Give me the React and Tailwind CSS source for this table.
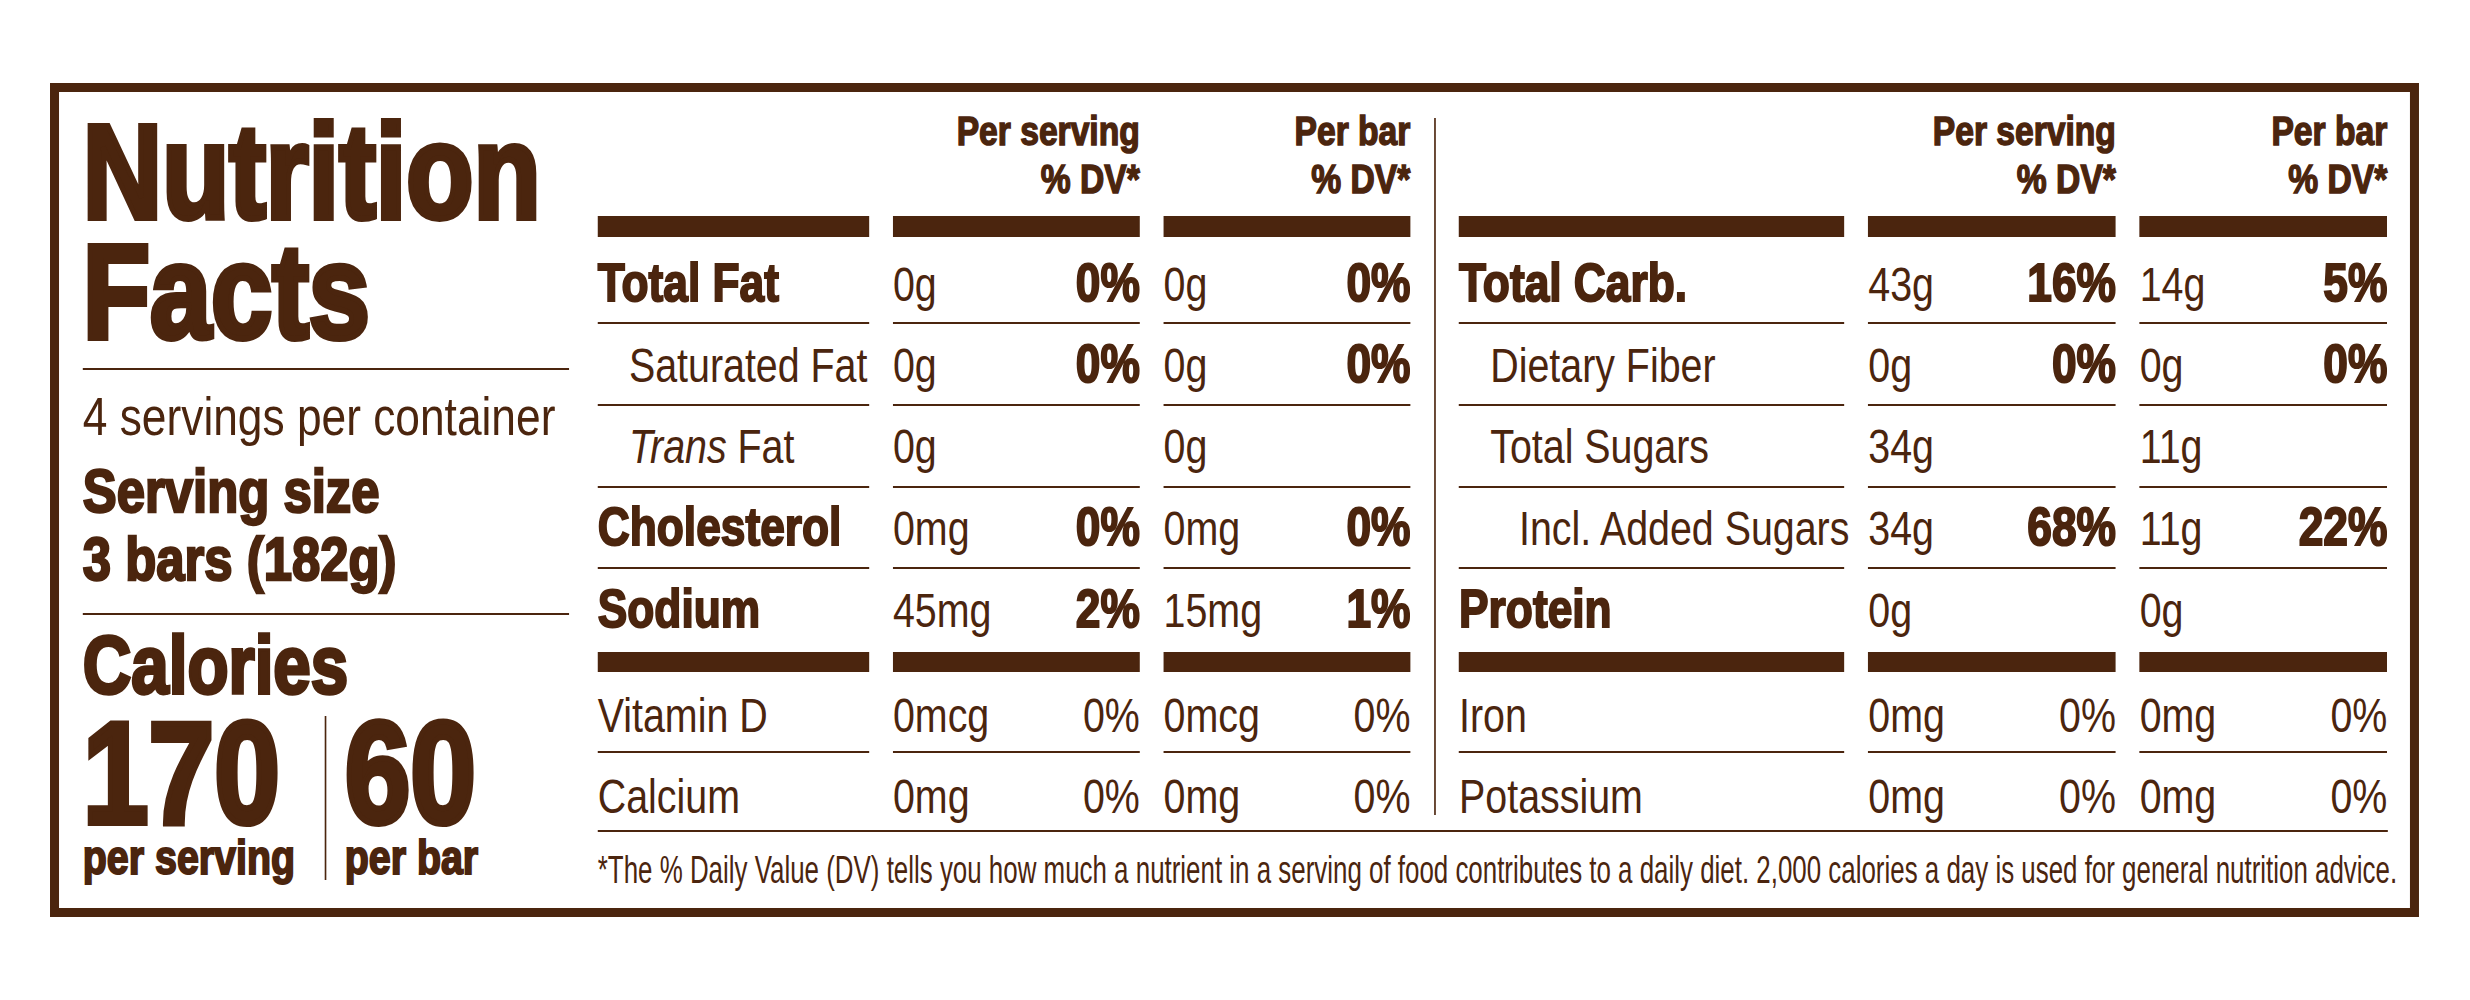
import React from "react";

const rowsMeta = [
  { h: "h-[87px]", p: "pb-[13px]", s: "border-b-2" },
  { h: "h-[82px]", p: "pb-[14px]", s: "border-b-2" },
  { h: "h-[82px]", p: "pb-[15px]", s: "border-b-2" },
  { h: "h-[81px]", p: "pb-[14px]", s: "border-b-2" },
  { h: "h-[103px]", p: "pb-[17px]", s: "border-b-[20px]" },
  { h: "h-[81px]", p: "pb-[11px]", s: "border-b-2" },
  { h: "h-[77px]", p: "pb-[9px]", s: "" },
];

const leftRows = [
  { l: "Total Fat", b: true, a: "0g", ap: "0%", c: "0g", cp: "0%", pb: true },
  { l: "Saturated Fat", i: 1, a: "0g", ap: "0%", c: "0g", cp: "0%", pb: true },
  {
    l: (
      <>
        <span className="italic">Trans</span> Fat
      </>
    ),
    i: 1,
    a: "0g",
    c: "0g",
  },
  { l: "Cholesterol", b: true, a: "0mg", ap: "0%", c: "0mg", cp: "0%", pb: true },
  { l: "Sodium", b: true, a: "45mg", ap: "2%", c: "15mg", cp: "1%", pb: true },
  { l: "Vitamin D", a: "0mcg", ap: "0%", c: "0mcg", cp: "0%" },
  { l: "Calcium", a: "0mg", ap: "0%", c: "0mg", cp: "0%" },
];

const rightRows = [
  { l: "Total Carb.", b: true, a: "43g", ap: "16%", c: "14g", cp: "5%", pb: true },
  { l: "Dietary Fiber", i: 1, a: "0g", ap: "0%", c: "0g", cp: "0%", pb: true },
  { l: "Total Sugars", i: 1, a: "34g", c: "11g" },
  { l: "Incl. Added Sugars", i: 2, a: "34g", ap: "68%", c: "11g", cp: "22%", pb: true },
  { l: "Protein", b: true, a: "0g", c: "0g" },
  { l: "Iron", a: "0mg", ap: "0%", c: "0mg", cp: "0%" },
  { l: "Potassium", a: "0mg", ap: "0%", c: "0mg", cp: "0%" },
];

const BOLD = "text-[54px] font-bold [-webkit-text-stroke:2px_#4b250e]";
const REG = "text-[48px] font-normal";

function Header({ title }) {
  return (
    <div className="h-[145px] border-b-[21px] border-[#4b250e] pt-[15px] text-right text-[41px] leading-[48px] font-bold [-webkit-text-stroke:1.5px_#4b250e]">
      <div>{title}</div>
      <div>% DV*</div>
    </div>
  );
}

function Table({ rows, cols }) {
  return (
    <div className={`grid ${cols} gap-x-[29px]`}>
      <div className="h-[145px] border-b-[21px] border-[#4b250e]" />
      <Header title="Per serving" />
      <Header title="Per bar" />
      {rows.map((r, k) => {
        const m = rowsMeta[k];
        const cell = `flex items-end leading-none whitespace-nowrap border-[#4b250e] ${m.h} ${m.p} ${m.s}`;
        const ind = r.i === 1 ? "pl-[38px]" : r.i === 2 ? "pl-[73px]" : "";
        const pc = r.pb ? BOLD : REG;
        return (
          <React.Fragment key={k}>
            <div className={cell}>
              <span className={`${ind} ${r.b ? BOLD : REG}`}>{r.l}</span>
            </div>
            <div className={`${cell} justify-between`}>
              <span className={REG}>{r.a}</span>
              <span className={pc}>{r.ap || ""}</span>
            </div>
            <div className={`${cell} justify-between`}>
              <span className={REG}>{r.c}</span>
              <span className={pc}>{r.cp || ""}</span>
            </div>
          </React.Fragment>
        );
      })}
    </div>
  );
}

export default function App() {
  return (
    <div className="min-h-screen overflow-hidden bg-white pl-[50px] pt-[83px] text-[#4b250e] font-['Liberation_Sans',Arial,sans-serif]">
      {/* condensed type: the whole label is drawn at Arial widths and narrowed */}
      <div className="w-[2889px] h-[834px] origin-top-left scale-x-[0.82] border-y-[9px] border-x-[11px] border-[#4b250e] flex">
        {/* Left panel */}
        <div className="ml-[29px] w-[593px] pt-[20px] flex flex-col">
          <div className="text-[134px] leading-[120px] font-bold [-webkit-text-stroke:6px_#4b250e]">
            <div>Nutrition</div>
            <div>Facts</div>
          </div>
          <div className="mt-[16px] h-[2px] bg-[#4b250e]" />
          <div className="mt-[19px] text-[54px] leading-none whitespace-nowrap">
            4 servings per container
          </div>
          <div className="mt-[14px] text-[62px] leading-[68px] font-bold [-webkit-text-stroke:2.5px_#4b250e] whitespace-nowrap">
            <div>Serving size</div>
            <div>3 bars (182g)</div>
          </div>
          <div className="mt-[20px] h-[2px] bg-[#4b250e]" />
          <div className="mt-[15px] text-[82px] leading-[70px] font-bold [-webkit-text-stroke:3.5px_#4b250e]">
            Calories
          </div>
          <div className="mt-[14px] flex">
            <div className="w-[295px] flex flex-col">
              <div className="text-[144px] leading-[120px] font-bold [-webkit-text-stroke:6px_#4b250e]">
                170
              </div>
              <div className="text-[48px] leading-none font-bold [-webkit-text-stroke:2px_#4b250e] whitespace-nowrap">
                per serving
              </div>
            </div>
            <div className="w-[2.4px] my-[2px] bg-[#4b250e]" />
            <div className="pl-[22px] flex flex-col">
              <div className="text-[144px] leading-[120px] font-bold [-webkit-text-stroke:6px_#4b250e]">
                60
              </div>
              <div className="text-[48px] leading-none font-bold [-webkit-text-stroke:2px_#4b250e] whitespace-nowrap">
                per bar
              </div>
            </div>
          </div>
        </div>

        {/* Tables */}
        <div className="ml-[35px] w-[2183px] flex flex-col">
          <div className="flex">
            <div className="w-[991px]">
              <Table rows={leftRows} cols="grid-cols-[331px_301px_301px]" />
            </div>
            <div className="ml-[29px] w-[2.4px] mt-[26px] mb-[15px] bg-[#4b250e]" />
            <div className="ml-[28px] w-[1132px]">
              <Table rows={rightRows} cols="grid-cols-[470px_302px_302px]" />
            </div>
          </div>
          <div className="h-[2px] bg-[#4b250e]" />
          <div className="mt-[18px] text-[39px] leading-none whitespace-nowrap origin-left scale-x-[0.81]">
            *The % Daily Value (DV) tells you how much a nutrient in a serving of food contributes to a daily diet. 2,000 calories a day is used for general nutrition advice.
          </div>
        </div>
      </div>
    </div>
  );
}
